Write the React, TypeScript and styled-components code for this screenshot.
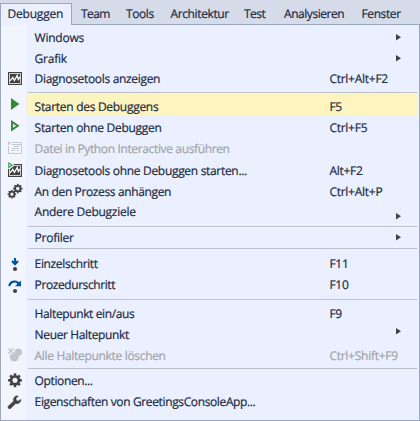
import React from "react";
import styled, { createGlobalStyle } from "styled-components";

const ink = "#424242";
const edge = "#9ba7bd";

const GlobalStyle = createGlobalStyle`
  body {
    margin: 0;
    overflow: hidden;
    background: #eaf0ff;
    font-family: "Open Sans", sans-serif;
    font-size: 12px;
    color: #1b293e;
    text-rendering: geometricPrecision;
    -webkit-text-stroke: 0.2px currentColor;
  }
`;

const Window = styled.div`
  width: 420px;
  height: 421px;
  display: flex;
  flex-direction: column;
`;

const MenuBar = styled.nav`
  height: 24px;
  flex: none;
  display: flex;
  align-items: flex-end;
  background: #d6dbe9;
  border-bottom: 1px solid ${edge};
`;

const MenuTitle = styled.div<{ $w: number; $track: number; $open?: boolean }>`
  box-sizing: border-box;
  width: ${p => p.$w}px;
  flex: none;
  height: 22px;
  margin-bottom: -1px;
  padding-left: ${p => (p.$open ? 6.5 : 0)}px;
  border: 1px solid ${p => (p.$open ? edge : "transparent")};
  border-bottom: 0;
  border-left-width: ${p => (p.$open ? 1 : 0)}px;
  background: ${p => (p.$open ? "#eaf0ff" : "transparent")};
  line-height: 20px;
  letter-spacing: ${p => p.$track}px;
  white-space: nowrap;
`;

const Panel = styled.div`
  box-sizing: border-box;
  height: 396px;
  padding-top: 2px;
  border: 1px solid ${edge};
  border-top: 0;
  background: linear-gradient(to right, #f2f4fe 25px, #eaf0ff 25px);
`;

const Row = styled.div<{ $h: number; $off?: boolean }>`
  height: ${p => p.$h}px;
  display: flex;
  padding-right: 2px;
  line-height: 21px;
  white-space: nowrap;
  color: ${p => (p.$off ? "#a2a4a5" : "inherit")};
`;

const IconCell = styled.div<{ $pad: number }>`
  width: 26px;
  flex: none;
  box-sizing: border-box;
  padding: ${p => p.$pad}px 0 0 6px;
`;

const Body = styled.div<{ $pad: number; $hot?: boolean }>`
  flex: 1;
  display: flex;
  padding: ${p => p.$pad}px 0 0 7.6px;
  background: ${p => (p.$hot ? "#fdf4bf" : "transparent")};
`;

const Label = styled.span<{ $track: number }>`
  width: 294.8px;
  letter-spacing: ${p => p.$track - 0.03}px;
`;

const Shortcut = styled.span`
  width: 66.6px;
  letter-spacing: -0.26px;
`;

const Separator = styled.div<{ $top: number; $bottom: number }>`
  height: 1px;
  margin: ${p => p.$top}px 2px ${p => p.$bottom}px 27px;
  background: #bec3cb;
`;

const Svg = styled.svg`
  display: block;
  overflow: visible;
`;

type IconName =
  | "chart" | "play" | "playOutline" | "script" | "chartPlay" | "gears"
  | "stepInto" | "stepOver" | "clear" | "gear" | "wrench";

const Chart = () => (
  <>
    <rect x="1.6" y="4.6" width="12.8" height="11.8" fill="#f6f6fa" stroke={ink} strokeWidth="1.2" />
    <path d="M3 15V6h10v9z" fill={ink} />
    <path d="M3 12.8 5.8 9.5 7.4 12.5 10.2 7.4 11.3 11.4 13 9" fill="none" stroke="#fff" strokeWidth="1.3" />
  </>
);

const Cog = ({ x, y, r }: { x: number; y: number; r: number }) => (
  <g transform={`translate(${x} ${y})`}>
    <circle r={r * 0.58} fill="none" stroke={ink} strokeWidth={r * 0.42} />
    {[0, 45, 90, 135, 180, 225, 270, 315].map(a => (
      <path key={a} d={`M0 ${-r * 0.7}V${-r}`} stroke={ink} strokeWidth={r * 0.36} transform={`rotate(${a})`} />
    ))}
  </g>
);

const icons: Record<IconName, React.ReactNode> = {
  chart: <Chart />,
  play: <path d="M4 2v12l8.3-6z" fill="#2f8a35" />,
  playOutline: <path d="M5 4.9v7.8l5.8-3.9z" fill="none" stroke="#2f8a35" strokeWidth="1.9" />,
  script: (
    <g fill="none" stroke="#c6c8d0" strokeWidth="1">
      <path d="M5 4.500h9.500v11h-13V8" />
      <path d="M5 6.500h9.500M7 8.500h5M5 10.500h7M4 12.500h4M10 12.500h2" />
      <path d="M1 3.200v4L4.200 5.200z" fill="#c6c8d0" stroke="none" />
    </g>
  ),
  chartPlay: (
    <>
      <Chart />
      <path d="M0 1h6l1 5-4 3H0z" fill="#f2f4fe" />
      <path d="M1.800 3v4.400l3.400-2.200z" fill="#fff" stroke="#3a9a40" strokeWidth="1.100" />
    </>
  ),
  gears: (
    <>
      <Cog x={10.8} y={7.6} r={4.7} />
      <Cog x={4.900} y={13.200} r={4.300} />
    </>
  ),
  stepInto: (
    <>
      <path d="M8 5v5.500M5 8l3 3.200L11 8" fill="none" stroke="#00539c" strokeWidth="2.100" />
      <circle cx="8" cy="16" r="2.100" fill={ink} />
    </>
  ),
  stepOver: (
    <>
      <path d="M2.300 12.200C3 6.800 9.500 6 12 10.200" fill="none" stroke="#00539c" strokeWidth="2.200" />
      <path d="M14 6.500v5.800H8z" fill="#00539c" />
      <circle cx="8" cy="17" r="2.100" fill={ink} />
    </>
  ),
  clear: (
    <g fill="#c4c5cb">
      <circle cx="11.300" cy="7.300" r="3.800" />
      <circle cx="7.300" cy="12" r="4.500" />
      <path d="M1.500 3.500l5 5M6.500 3.500l-5 5" stroke="#f2f4fe" strokeWidth="2.600" />
      <path d="M1.500 3.500l5 5M6.500 3.500l-5 5" stroke="#c4c5cb" strokeWidth="1.500" />
    </g>
  ),
  gear: (
    <g transform="translate(8 10.300)">
      <circle r="3.900" fill="none" stroke={ink} strokeWidth="2.700" />
      {[0, 45, 90, 135, 180, 225, 270, 315].map(a => (
        <path key={a} d="M0-4.500V-6.900" stroke={ink} strokeWidth="2.500" transform={`rotate(${a})`} />
      ))}
    </g>
  ),
  wrench: (
    <path
      d="M14 8.200A4 4 0 0 1 8.700 12.500L3.900 17.300A1.700 1.700 0 0 1 1.400 14.900L6.500 10.200A4 4 0 0 1 11.300 5L9 7.400 9.400 9.500 11.600 9.900z"
      fill={ink}
      stroke={ink}
      strokeWidth="0.400"
    />
  ),
};

interface Item {
  text: string;
  track: number;
  h: number;
  pad?: number;
  icon?: IconName;
  keys?: string;
  arrow?: number;
  off?: boolean;
  hot?: boolean;
}

interface Rule {
  top: number;
  bottom: number;
}

const entries: (Item | Rule)[] = [
  { text: "Windows", track: -0.2, h: 21, arrow: 10 },
  { text: "Grafik", track: -0.2, h: 20, arrow: 10 },
  { text: "Diagnosetools anzeigen", track: -0.29, h: 21, icon: "chart", keys: "Ctrl+Alt+F2" },
  { top: 3, bottom: 1 },
  { text: "Starten des Debuggens", track: -0.26, h: 22, pad: 2, icon: "play", keys: "F5", hot: true },
  { text: "Starten ohne Debuggen", track: -0.26, h: 22, pad: 1, icon: "playOutline", keys: "Ctrl+F5" },
  { text: "Datei in Python Interactive ausführen", track: -0.33, h: 22, icon: "script", off: true },
  { text: "Diagnosetools ohne Debuggen starten...", track: -0.28, h: 21, icon: "chartPlay", keys: "Alt+F2" },
  { text: "An den Prozess anhängen", track: -0.34, h: 20, icon: "gears", keys: "Ctrl+Alt+P" },
  { text: "Andere Debugziele", track: -0.24, h: 21, arrow: 15 },
  { top: 4, bottom: 0 },
  { text: "Profiler", track: -0.23, h: 21, arrow: 10 },
  { top: 0, bottom: 4 },
  { text: "Einzelschritt", track: -0.33, h: 21, icon: "stepInto", keys: "F11" },
  { text: "Prozedurschritt", track: -0.38, h: 21, icon: "stepOver", keys: "F10" },
  { top: 4, bottom: 3 },
  { text: "Haltepunkt ein/aus", track: -0.35, h: 21, keys: "F9" },
  { text: "Neuer Haltepunkt", track: -0.33, h: 21, arrow: 7 },
  { text: "Alle Haltepunkte löschen", track: -0.29, h: 21, icon: "clear", keys: "Ctrl+Shift+F9", off: true },
  { top: 2, bottom: 1 },
  { text: "Optionen...", track: -0.34, h: 21, icon: "gear" },
  { text: "Eigenschaften von GreetingsConsoleApp...", track: -0.34, h: 21, icon: "wrench" },
];

const MenuRow = ({ item }: { item: Item }) => (
  <Row $h={item.h} $off={item.off}>
    <IconCell $pad={item.pad ?? 0}>
      {item.icon && <Svg width="16" height="20">{icons[item.icon]}</Svg>}
    </IconCell>
    <Body $pad={item.pad ?? 0} $hot={item.hot}>
      <Label $track={item.track}>{item.text}</Label>
      <Shortcut>{item.keys}</Shortcut>
      {item.arrow && (
        <Svg width="6" height="20">
          <path d={`M0 ${item.arrow - 3}v6.400l5-3.200z`} fill={ink} />
        </Svg>
      )}
    </Body>
  </Row>
);

export default function App() {
  return (
    <>
      <GlobalStyle />
      <Window>
        <MenuBar>
          <MenuTitle $w={72} $track={-0.2} $open>Debuggen</MenuTitle>
          <MenuTitle $w={9} $track={0} />
          <MenuTitle $w={45} $track={-0.6}>Team</MenuTitle>
          <MenuTitle $w={44.5} $track={-0.4}>Tools</MenuTitle>
          <MenuTitle $w={73.5} $track={-0.38}>Architektur</MenuTitle>
          <MenuTitle $w={40} $track={-0.5}>Test</MenuTitle>
          <MenuTitle $w={77.5} $track={-0.45}>Analysieren</MenuTitle>
          <MenuTitle $w={58.5} $track={-0.4}>Fenster</MenuTitle>
        </MenuBar>
        <Panel>
          {entries.map((e, i) =>
            "text" in e ? <MenuRow key={i} item={e} /> : <Separator key={i} $top={e.top} $bottom={e.bottom} />
          )}
        </Panel>
      </Window>
    </>
  );
}
